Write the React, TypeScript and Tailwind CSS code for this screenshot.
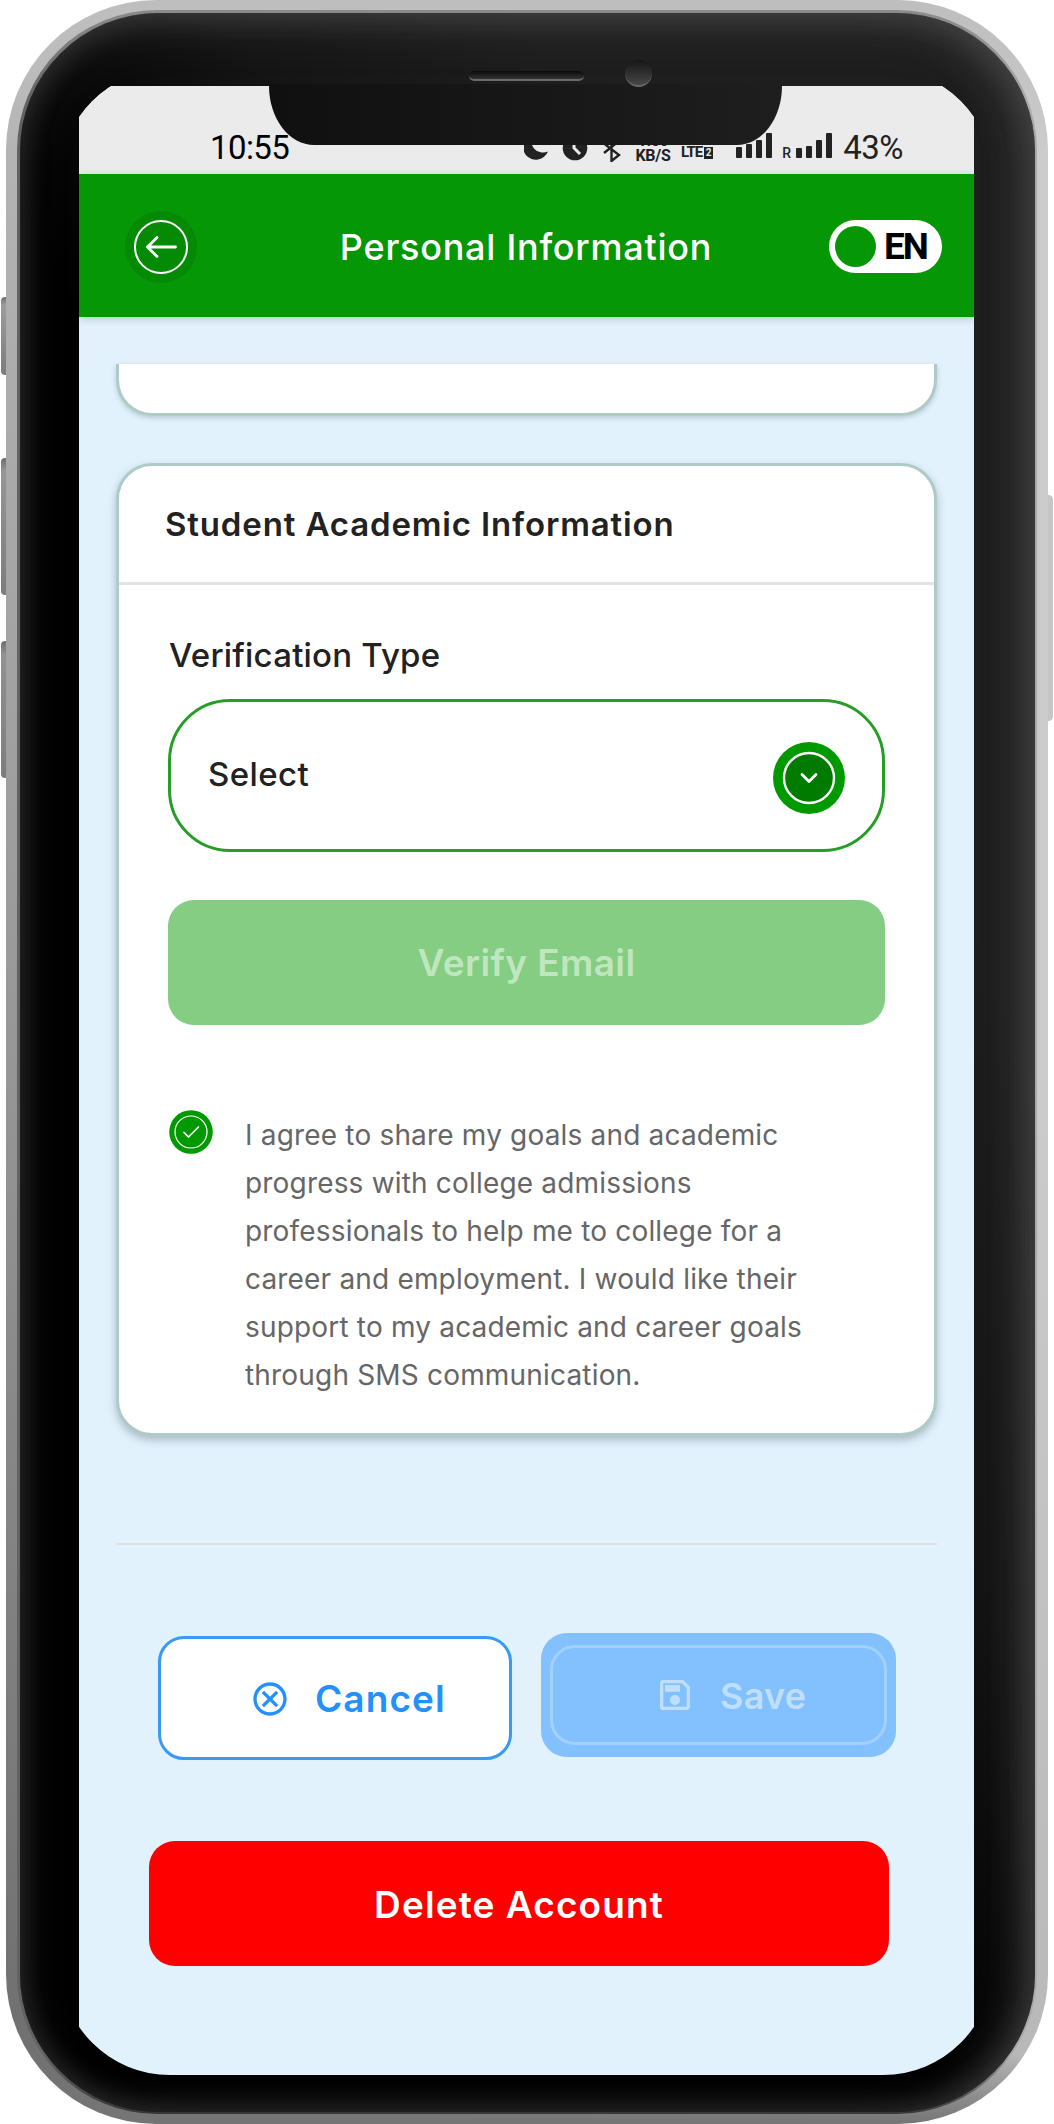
import { MdOutlineCancel, MdOutlineSave } from "react-icons/md";

function StatusBar() {
  return (
    <div className="flex h-[88px] items-end bg-[#ebebeb] font-[Roboto,sans-serif] text-[#222]">
      <span className="ml-[131px] w-[81px] pb-[6px] text-[33px] font-[450] leading-[40px] tracking-[-0.6px] text-black">10:55</span>
      <svg className="mb-[12px] ml-[233px]" width="100" height="32" viewBox="0 0 100 32" fill="none">
        <path d="M9 4a13 13 0 1 0 15 17.500A12 12 0 0 1 9 4z" fill="#222" />
        <circle cx="51" cy="18" r="12.300" fill="#222" />
        <path d="M50 9v9l6 6" stroke="#ebebeb" strokeWidth="3" />
        <path d="M80 13.500 95 25l-7.500 6V4L95 11 80 23" stroke="#222" strokeWidth="2.400" />
      </svg>
      <div className="mb-[11px] ml-[11px] flex w-[36px] flex-col text-center text-[16px] font-bold leading-[15px] tracking-[-0.3px]">
        <span>1.60</span>
        <span>KB/S</span>
      </div>
      <div className="mb-[14px] ml-[10px] flex items-center text-[15px] font-bold leading-[15px] tracking-[-1px]">
        <span>LTE</span>
        <span className="ml-[2px] h-[12px] w-[9px] bg-[#222] text-center text-[10px] leading-[12px] tracking-normal text-[#ebebeb]">2</span>
      </div>
      <div className="mb-[16px] ml-[23px] flex items-end gap-[4px]">
        <i className="h-[11px] w-[6px] rounded-[1px] bg-[#222]" />
        <i className="h-[14px] w-[6px] rounded-[1px] bg-[#222]" />
        <i className="h-[18px] w-[6px] rounded-[1px] bg-[#222]" />
        <i className="h-[25px] w-[6px] rounded-[1px] bg-[#222]" />
      </div>
      <span className="mb-[13px] ml-[10px] w-[10px] text-[14px] font-medium leading-[16px]">R</span>
      <div className="mb-[16px] ml-[4px] flex items-end gap-[4px]">
        <i className="h-[10px] w-[6px] rounded-[1px] bg-[#222]" />
        <i className="h-[12px] w-[6px] rounded-[1px] bg-[#222]" />
        <i className="h-[18px] w-[6px] rounded-[1px] bg-[#222]" />
        <i className="h-[25px] w-[6px] rounded-[1px] bg-[#222]" />
      </div>
      <span className="ml-[11px] pb-[6px] text-[33px] leading-[40px] tracking-[-0.5px]">43%</span>
    </div>
  );
}

function Header() {
  return (
    <header className="relative z-10 flex h-[143px] items-center justify-between bg-[#059705] pl-[46px] pr-[32px] pt-[2px] shadow-[0_2px_8px_rgba(0,0,0,0.18)]">
      <div className="flex size-[72px] items-center justify-center rounded-full bg-[#048a04]">
        <svg width="56" height="56" viewBox="0 0 56 56" fill="none" stroke="#fff" strokeLinecap="round" strokeLinejoin="round">
          <circle cx="28" cy="28" r="26" strokeWidth="2" />
          <path d="M42.500 28H14.500M24 18.500 14.500 28l9.500 9.500" strokeWidth="2.800" />
        </svg>
      </div>
      <h1 className="ml-[26px] text-[36px] font-medium leading-[44px] tracking-[0.75px] text-white">Personal Information</h1>
      <div className="flex h-[53px] w-[113px] items-center rounded-full bg-white pl-[6px]">
        <span className="size-[41px] rounded-full bg-[#059705]" />
        <span className="ml-[8px] font-[Roboto,sans-serif] text-[37px] font-bold leading-[53px] tracking-[-2px] text-black">EN</span>
      </div>
    </header>
  );
}

function AcademicCard() {
  return (
    <section className="mx-[37px] mt-[47px] h-[973px] rounded-[36px] border-[3px] border-[#b0cbc5] bg-white shadow-[0_4px_8px_rgba(60,80,90,0.35)]">
      <h2 className="flex h-[119px] items-center border-b-[3px] border-[#e4e4e4] pl-[46px] pt-[2px] text-[33px] font-[620] tracking-[0.85px] text-[#222]">
        Student Academic Information
      </h2>
      <div className="px-[49px] pt-[50px]">
        <p className="h-[64px] pl-px text-[33px] leading-[40px] text-[#222]">
          <span className="font-[450] tracking-[0.2px]">Verification Type</span>
        </p>
        <div className="flex h-[153px] items-center justify-between rounded-[62px] border-[3px] border-[#259e25] pl-[37px] pr-[37px]">
          <span className="-mt-[4px] text-[33px] font-medium leading-[40px] tracking-[0.4px] text-[#222]">Select</span>
          <span className="mt-[5px] flex size-[72px] items-center justify-center rounded-full bg-[#009a00]">
            <svg width="54" height="54" viewBox="0 0 54 54" fill="none" stroke="#fff" strokeLinecap="round" strokeLinejoin="round">
              <circle cx="27" cy="27" r="25" fill="#007b00" strokeWidth="2.400" />
              <path d="M20 23.500 27 30.500 34 23.500" strokeWidth="2.800" />
            </svg>
          </span>
        </div>
        <button className="mt-[48px] flex h-[125px] w-full items-center justify-center rounded-[26px] bg-[#84cd82] text-[37px] font-semibold leading-[44px] tracking-[0.4px] text-[#c0e6bf]">
          Verify Email
        </button>
        <div className="mt-[85px] flex items-start pl-px">
          <svg className="shrink-0" width="44" height="44" viewBox="0 0 44 44" fill="none" stroke="#fff" strokeLinecap="round" strokeLinejoin="round">
            <circle cx="22" cy="22" r="21.800" fill="#009a00" stroke="none" />
            <circle cx="22" cy="22" r="16" strokeWidth="1.200" />
            <path d="M15 22.500 19.500 27 29.500 17" strokeWidth="1.700" />
          </svg>
          <p className="ml-[32px] mt-px whitespace-nowrap text-[28px] leading-[48px] tracking-[0.18px] text-[#666]">
            I agree to share my goals and academic
            <br />
            progress with college admissions
            <br />
            professionals to help me to college for a
            <br />
            career and employment. I would like their
            <br />
            support to my academic and career goals
            <br />
            through SMS communication.
          </p>
        </div>
      </div>
    </section>
  );
}

function Actions() {
  return (
    <div className="flex flex-col">
      <hr className="mx-[37px] mt-[107px] h-[2px] border-0 bg-[#dcdfe4]" />
      <div className="ml-[79px] mt-[88px] flex items-start gap-[29px]">
        <button className="mt-[3px] flex h-[124px] w-[354px] items-center rounded-[26px] border-[3px] border-[#3a99f2] bg-white pl-[89px] pt-px text-[#2390fb]">
          <MdOutlineCancel size={40} />
          <span className="ml-[25px] text-[37px] font-semibold leading-[44px] tracking-[1.1px]">Cancel</span>
        </button>
        <button className="flex h-[124px] w-[355px] items-center justify-center rounded-[26px] bg-[#82c0fe] text-[#c0dfff]">
          <span className="flex h-[100px] w-[337px] items-center rounded-[25px] border-[3px] border-[#a2d1fd] pl-[102px]">
            <MdOutlineSave size={40} />
            <span className="ml-[25px] pt-px text-[36px] font-semibold leading-[44px] tracking-[0.3px]">Save</span>
          </span>
        </button>
      </div>
      <button className="ml-[70px] mt-[81px] flex h-[125px] w-[740px] items-center justify-center rounded-[26px] bg-[#ff0000] pt-[2px] text-[37px] font-semibold leading-[44px] tracking-[1.1px] text-white">
        Delete Account
      </button>
    </div>
  );
}

export default function App() {
  return (
    <div className="relative h-[2124px] w-[1054px] overflow-hidden bg-white px-[6px] font-[Inter,sans-serif]">
      <i className="absolute left-[1px] top-[297px] h-[78px] w-[8px] rounded-[5px] bg-linear-to-b from-[#6e6e6e] via-[#9c9c9c] via-10% to-[#7c7c7c]" />
      <i className="absolute left-[1px] top-[458px] h-[137px] w-[8px] rounded-[5px] bg-linear-to-b from-[#6e6e6e] via-[#969696] via-10% to-[#7c7c7c]" />
      <i className="absolute left-[1px] top-[641px] h-[137px] w-[8px] rounded-[5px] bg-linear-to-b from-[#6e6e6e] via-[#929292] via-10% to-[#7c7c7c]" />
      <i className="absolute left-[1044px] top-[495px] h-[226px] w-[9px] rounded-[5px] bg-[#c6c6c6]" />
      <div className="relative h-[2124px] w-[1042px] rounded-[150px] bg-[linear-gradient(to_top,#757575,#75757500_70px),linear-gradient(to_bottom,#bebebe,#bebebe00_160px),linear-gradient(to_top_right,#6c6c6c,#969696_25%,#b8b8b8_50%,#cccccc_75%,#cccccc)] px-[11px] py-[10px]">
        <div className="h-[2104px] rounded-[140px] bg-[linear-gradient(to_top,#363636,#36363600_60px),linear-gradient(to_bottom,#8a8a8a,#8a8a8a00_90px),linear-gradient(to_right,#626262,#aaaaaa)] p-[2.5px]">
          <div className="h-[2099px] rounded-[138px] bg-[linear-gradient(to_top_right,#000_45%,#141414_60%,#1e1e1e_75%)] px-[59.500px] pt-[73.500px] shadow-[inset_0_12px_50px_rgba(110,110,110,0.24),inset_-14px_0_40px_rgba(110,110,110,0.32),inset_0_0_30px_rgba(90,90,90,0.25)]">
            <div className="h-[1989px] w-[895px] overflow-hidden">
              <div className="-mx-[19px] -mt-[17px] h-[2006px] overflow-hidden rounded-[110px] bg-[#e1f2fd] px-[19px] pt-[17px]">
                <StatusBar />
                <Header />
                <div className="h-[47px] bg-[#e3f1fd]" />
                <section className="mx-[37px] h-[52px] rounded-b-[36px] border-x-[3px] border-b-[3px] border-[#b0cbc5] bg-white shadow-[0_2px_5px_rgba(60,80,90,0.25)]" />
                <AcademicCard />
                <Actions />
              </div>
            </div>
          </div>
        </div>
        <div className="absolute left-[263px] top-[84px] z-20 h-[61px] w-[513px] rounded-b-[45px_59px] bg-linear-to-r from-[#101010] to-[#1e1e1e]" />
        <i className="absolute left-[463px] top-[71px] z-20 h-[10px] w-[115px] rounded-full border-b-2 border-[#6a6a6a] bg-linear-to-b from-[#0a0a0a] to-[#333]" />
        <i className="absolute left-[619px] top-[60px] z-20 size-[27px] rounded-full border-b-2 border-[#6a6a6a] bg-linear-to-b from-[#161616] to-[#484848]" />
      </div>
    </div>
  );
}
